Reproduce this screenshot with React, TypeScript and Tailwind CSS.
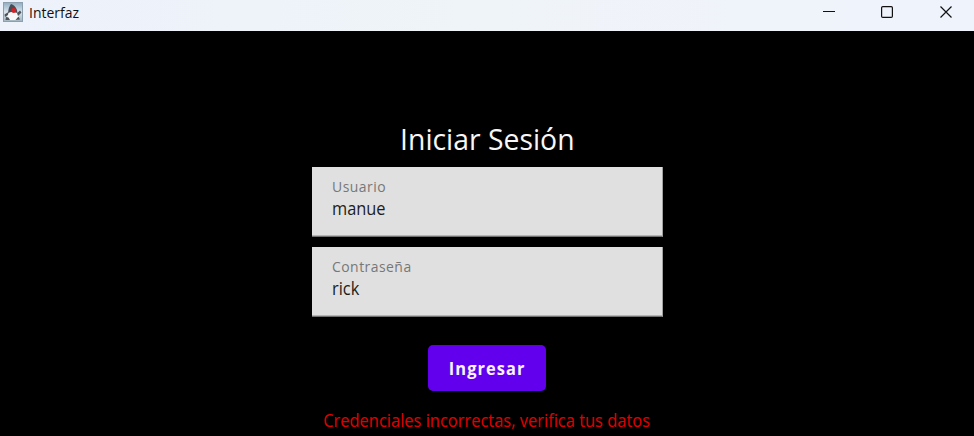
function JavaIcon() {
  return (
    <svg width="20" height="20" viewBox="0 0 20 20" aria-hidden="true">
      <defs>
        <linearGradient id="tile" x1="0" y1="0" x2="0" y2="1">
          <stop offset="0" stopColor="#8fabc2" />
          <stop offset="0.5" stopColor="#d9e4ec" />
          <stop offset="1" stopColor="#a3b5c2" />
        </linearGradient>
      </defs>
      <rect x="0.5" y="0.5" width="19" height="19" fill="url(#tile)" stroke="#8b9fae" />
      <path d="M6 9 L4 14 L6 18 L15 18 L16 14 L14 9Z" fill="#f7f8f8" />
      <path d="M8 2 Q12 3 14 8 L14.5 11 L12.5 10.5 L8 10 L5 11 Q5.5 5 8 2Z" fill="#484c54" />
      <path d="M5.5 10 L1.5 12.5 L2 15 L5 13Z M14 11 L17 8.5 L18.5 10.5 L15 14Z" fill="#505458" />
      <path d="M3 15 L2.5 18 L7 18 L5.5 15.5Z M15.5 14.5 L17 17.5 L12.5 18 Z" fill="#505357" />
      <circle cx="10.7" cy="8.5" r="2.4" fill="#d92023" />
    </svg>
  );
}

function TitleBar() {
  return (
    <header className="flex h-[31px] items-start justify-between bg-gradient-to-r from-[#edf2fb] via-[#eff4f8] to-[#eff3fc]">
      <div className="flex items-start pl-[3px] pt-[2px]">
        <JavaIcon />
        <span className="ml-[6px] origin-left scale-x-[0.93] text-[15px] leading-[20px] text-[#111]">Interfaz</span>
      </div>
      <div className="flex pr-[21px] pt-[5px]">
        <svg width="131" height="14" viewBox="0 0 131 14" fill="none" stroke="#111" aria-hidden="true">
          <path d="M1 6.5H13" />
          <rect x="59.6" y="1.6" width="10.8" height="10.8" rx="1.2" strokeWidth="1.2" />
          <path d="M118.5 1.5L129.5 12.5M129.5 1.5L118.5 12.5" strokeWidth="1.2" />
        </svg>
      </div>
    </header>
  );
}

function Field({ label, value }: { label: string; value: string }) {
  return (
    <label className="flex h-[70px] w-[351px] flex-col items-start border-b border-r border-b-[#707070] border-r-[#a0a0a0] bg-[#e0e0e0] pl-5 pt-[9px] shadow-[inset_0_-1px_0_#b4b4b4]">
      <span className="origin-left scale-x-[0.93] text-[15px] leading-[20px] tracking-[0.5px] text-[#777]">{label}</span>
      <span className="mt-px origin-left scale-x-[0.91] text-[18px] leading-[22px] text-[#1c1c1c]">{value}</span>
    </label>
  );
}

export default function App() {
  return (
    <div className="h-[436px] w-[974px] overflow-hidden bg-black font-['Open_Sans',sans-serif]">
      <TitleBar />
      <main className="flex flex-col items-center pt-[87px]">
        <h1 className="h-[49px] scale-x-[0.945] whitespace-nowrap text-[30px] leading-[41px] text-[#f7f7f7]">Iniciar Sesión</h1>
        <div className="flex flex-col gap-[10px]">
          <Field label="Usuario" value="manue" />
          <Field label="Contraseña" value="rick" />
        </div>
        <button className="mt-7 flex h-[46px] w-[118px] items-center justify-center rounded-[5px] bg-[#6200ee]">
          <span className="scale-x-[0.91] text-[18px] font-bold tracking-[1.2px] text-[#f8f4ff]">Ingresar</span>
        </button>
        <p className="mt-[17px] scale-x-[0.915] whitespace-nowrap text-[18px] leading-[24px] text-[#e00000]">Credenciales incorrectas, verifica tus datos</p>
      </main>
    </div>
  );
}
